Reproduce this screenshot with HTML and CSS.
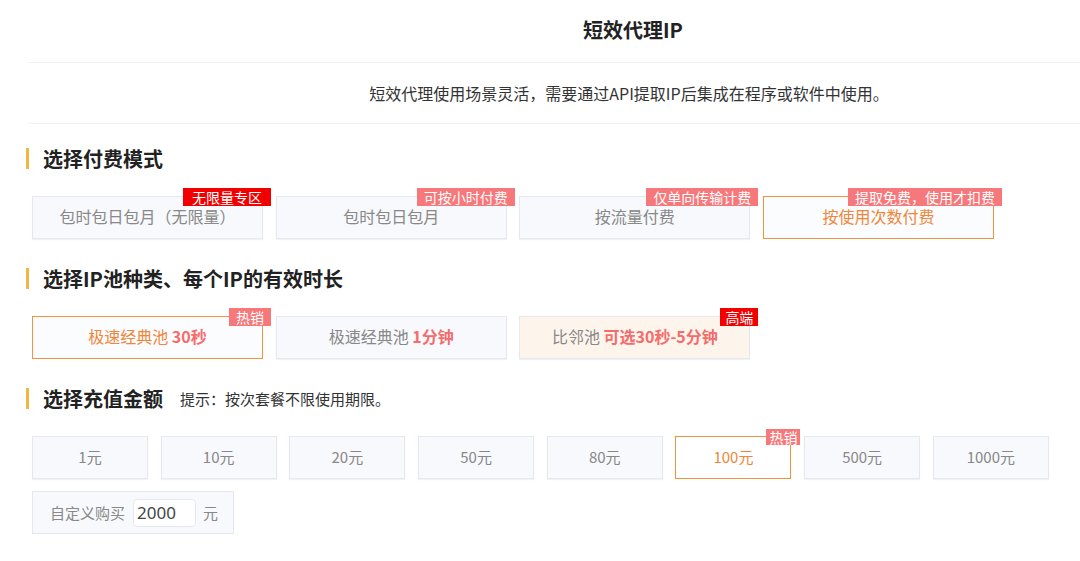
FILE: index.html
```html
<!DOCTYPE html>
<html lang="zh-CN">
<head>
    <meta charset="UTF-8">
    <meta name="viewport" content="width=device-width, initial-scale=1.0">
    <title>短效代理IP</title>
    <link rel="stylesheet" href="styles.css">
</head>
<body>
    <div class="page">
        <div class="page-title">短效代理IP</div>
        <div class="intro">短效代理使用场景灵活，需要通过API提取IP后集成在程序或软件中使用。</div>

        <div class="section-title"><span class="bar"></span>选择付费模式</div>
        <div class="options">
            <div class="option">包时包日包月（无限量）<span class="badge red">无限量专区</span></div>
            <div class="option">包时包日包月<span class="badge">可按小时付费</span></div>
            <div class="option">按流量付费<span class="badge">仅单向传输计费</span></div>
            <div class="option active">按使用次数付费<span class="badge">提取免费，使用才扣费</span></div>
        </div>

        <div class="section-title"><span class="bar"></span>选择IP池种类、每个IP的有效时长</div>
        <div class="options">
            <div class="option active">极速经典池&nbsp;<b>30秒</b><span class="badge">热销</span></div>
            <div class="option">极速经典池&nbsp;<b>1分钟</b></div>
            <div class="option cream">比邻池&nbsp;<b>可选30秒-5分钟</b><span class="badge red tight">高端</span></div>
        </div>

        <div class="section-title"><span class="bar"></span>选择充值金额<span class="hint">提示：按次套餐不限使用期限。</span></div>
        <div class="amounts">
            <div class="option">1元</div>
            <div class="option">10元</div>
            <div class="option">20元</div>
            <div class="option">50元</div>
            <div class="option">80元</div>
            <div class="option active">100元<span class="badge small">热销</span></div>
            <div class="option">500元</div>
            <div class="option">1000元</div>
        </div>
        <div class="custom">
            <span>自定义购买</span>
            <input class="custom-input" type="text" value="2000">
            <span>元</span>
        </div>
    </div>
</body>
</html>
```

FILE: styles.css
```css
body, html {
    margin: 0;
    padding: 0;
    background: #fff;
    font-family: "Noto Sans CJK SC", "Noto Sans", sans-serif;
    overflow: hidden;
}
.page {
    margin-left: 26px;
}
.page-title {
    height: 62px;
    line-height: 60px;
    padding-left: 158px;
    text-align: center;
    font-size: 20px;
    font-weight: bold;
    color: #222;
    border-bottom: 1px solid #f1f1f1;
    margin-left: 2px;
}
.intro {
    height: 60px;
    line-height: 60px;
    padding-left: 150px;
    text-align: center;
    font-size: 16px;
    color: #333;
    border-bottom: 1px solid #f1f1f1;
    margin-left: 2px;
}
.section-title {
    display: flex;
    align-items: center;
    height: 28px;
    margin: 20px 0 24px;
    font-size: 20px;
    font-weight: bold;
    color: #222;
}
.section-title .bar {
    width: 3px;
    height: 21px;
    background: #f4b642;
    margin-right: 14px;
}
.hint {
    font-size: 15px;
    font-weight: normal;
    color: #333;
    margin-left: 17px;
}
.options {
    display: flex;
    gap: 12.7px;
    padding-left: 6px;
}
.options + .section-title {
    margin-top: 25px;
}
.option {
    position: relative;
    width: 231px;
    height: 43px;
    box-sizing: border-box;
    display: flex;
    align-items: center;
    justify-content: center;
    padding-bottom: 3px;
    background: #f7f9fc;
    border: 1px solid #e5e9ef;
    box-shadow: 0 1px 1px rgba(0, 0, 0, 0.05);
    font-size: 16px;
    color: #888;
    white-space: nowrap;
}
.option b {
    color: #f46c6c;
}
.option.active {
    background: #fff;
    border-color: #f0923e;
    color: #f0863a;
    box-shadow: none;
}
.options .option.active {
    background: #fbfcfe;
}
.option.cream {
    background: #fdf5ec;
}
.badge {
    position: absolute;
    top: -9px;
    right: -9px;
    height: 18px;
    line-height: 18px;
    padding: 0 7px;
    font-size: 14px;
    font-weight: normal;
    color: #fff;
    background: #f7787a;
}
.badge.red {
    background: #f20000;
    padding: 0 9px;
}
.badge.tight {
    padding: 0 5px;
}
.badge.small {
    top: -8px;
    right: -10px;
    height: 16px;
    line-height: 16px;
    padding: 0 3px;
}
.amounts {
    display: flex;
    gap: 12.7px;
    padding-left: 6px;
}
.amounts .option {
    width: 116px;
    font-size: 15px;
}
.custom {
    display: flex;
    align-items: center;
    width: 202px;
    height: 43px;
    box-sizing: border-box;
    margin: 12px 0 0 6px;
    padding-left: 17px;
    background: #f7f9fc;
    border: 1px solid #e5e9ef;
    font-size: 15px;
    color: #888;
}
.custom-input {
    width: 63px;
    height: 28px;
    box-sizing: border-box;
    margin: 0 7px 0 8px;
    padding: 0 3px;
    border: 1px solid #e5e9ef;
    border-radius: 4px;
    background: #fff;
    font-family: "Noto Sans", sans-serif;
    font-size: 17px;
    color: #444;
    outline: none;
}
```
